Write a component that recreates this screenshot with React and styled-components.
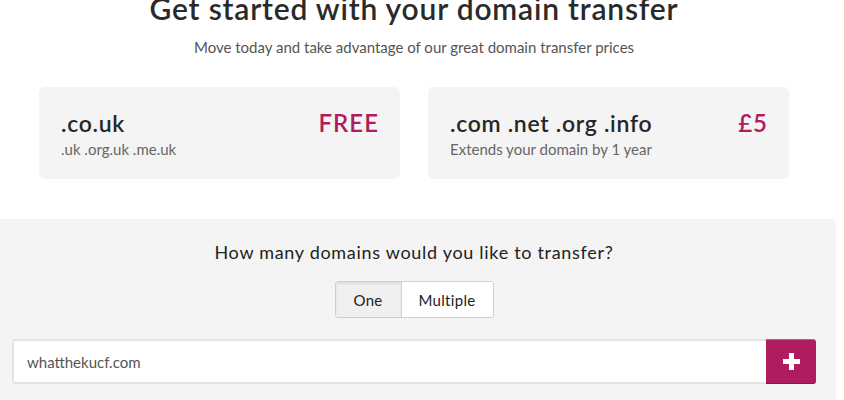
import React, { useState } from 'react';
import styled, { createGlobalStyle } from 'styled-components';

const GlobalStyle = createGlobalStyle`
  html, body {
    margin: 0;
    padding: 0;
    background: #fff;
    overflow: hidden;
  }
  body {
    font-family: 'Lato', 'Open Sans', sans-serif;
    color: #2a2a2a;
  }
`;

const Page = styled.div`
  width: 844px;
  margin-left: -8px;
`;

const Hero = styled.header`
  text-align: center;
  margin-top: -10px;
`;

const Title = styled.h1`
  margin: 0;
  font-size: 30px;
  line-height: 36px;
  font-weight: 600;
  letter-spacing: 0.8px;
  color: #2a2a2a;
`;

const Lead = styled.p`
  margin: 11px 0 0;
  font-size: 15px;
  line-height: 20px;
  color: #555;
`;

const Offers = styled.div`
  display: grid;
  grid-template-columns: 361px 361px;
  gap: 28px;
  justify-content: center;
  margin-top: 30px;
`;

const Offer = styled.div`
  background: #f4f4f4;
  border-radius: 6px;
  height: 92px;
  box-sizing: border-box;
  padding: 22px 21px 0 22px;
  display: flex;
  justify-content: space-between;
  align-items: flex-start;
`;

const OfferName = styled.div`
  font-size: 23px;
  line-height: 28px;
  font-weight: 600;
  letter-spacing: 0.7px;
  color: #262626;
`;

const OfferNote = styled.div`
  font-size: 15px;
  line-height: 20px;
  color: #666;
  margin-top: 2px;
`;

const Price = styled.div`
  font-size: 24px;
  line-height: 28px;
  font-weight: 600;
  letter-spacing: 1px;
  color: #b01c5d;
`;

const Transfer = styled.section`
  margin-top: 40px;
  background: #f4f4f4;
  border-top-right-radius: 6px;
  width: 844px;
  box-sizing: border-box;
  padding: 22px 20px 30px;
  display: flex;
  flex-direction: column;
  align-items: center;
`;

const Question = styled.h2`
  margin: 0;
  font-size: 18px;
  line-height: 22px;
  font-weight: 400;
  letter-spacing: 0.7px;
  color: #222;
`;

const Toggle = styled.div`
  display: flex;
  margin-top: 18px;
  border: 1px solid #cfcfcf;
  border-radius: 3px;
  overflow: hidden;
  background: #fff;
`;

const ToggleButton = styled.button`
  font-family: inherit;
  font-size: 15px;
  letter-spacing: 0.3px;
  color: #222;
  width: ${({ $width }) => $width}px;
  height: 35px;
  padding: 0;
  border: 0;
  border-left: ${({ $first }) => ($first ? '0' : '1px solid #d4d4d4')};
  background: ${({ $active }) => ($active ? '#f0f0f0' : '#fff')};
  box-shadow: ${({ $active }) => ($active ? 'inset 0 2px 3px rgba(0,0,0,0.08)' : 'none')};
  cursor: pointer;
`;

const Row = styled.div`
  display: flex;
  align-self: stretch;
  margin-top: 21px;
  height: 45px;
`;

const Field = styled.input`
  flex: 1;
  min-width: 0;
  box-sizing: border-box;
  height: 45px;
  border: 2px solid #e4e4e4;
  border-right: 0;
  border-radius: 3px 0 0 3px;
  padding: 0 13px;
  font-family: inherit;
  font-size: 15px;
  color: #555;
  background: #fff;
  outline: none;
`;

const AddButton = styled.button`
  width: 50px;
  height: 45px;
  border: 0;
  border-radius: 0 3px 3px 0;
  background: #b01c5d;
  border-top: 1px solid #c75a8a;
  border-bottom: 1px solid #8e1549;
  display: flex;
  align-items: center;
  justify-content: center;
  cursor: pointer;
`;

const offers = [
  { name: '.co.uk', note: '.uk .org.uk .me.uk', price: 'FREE' },
  { name: '.com .net .org .info', note: 'Extends your domain by 1 year', price: '£5' },
];

export default function App() {
  const [mode, setMode] = useState('one');
  const [domain, setDomain] = useState('whatthekucf.com');

  return (
    <Page>
      <GlobalStyle />
      <Hero>
        <Title>Get started with your domain transfer</Title>
        <Lead>Move today and take advantage of our great domain transfer prices</Lead>
      </Hero>

      <Offers>
        {offers.map((o) => (
          <Offer key={o.name}>
            <div>
              <OfferName>{o.name}</OfferName>
              <OfferNote>{o.note}</OfferNote>
            </div>
            <Price>{o.price}</Price>
          </Offer>
        ))}
      </Offers>

      <Transfer>
        <Question>How many domains would you like to transfer?</Question>
        <Toggle>
          <ToggleButton $first $width={65} $active={mode === 'one'} onClick={() => setMode('one')}>
            One
          </ToggleButton>
          <ToggleButton $width={92} $active={mode === 'multiple'} onClick={() => setMode('multiple')}>
            Multiple
          </ToggleButton>
        </Toggle>
        <Row>
          <Field value={domain} onChange={(e) => setDomain(e.target.value)} />
          <AddButton aria-label="Add domain">
            <svg width="17" height="17" viewBox="0 0 17 17">
              <path d="M6 0h5v6h6v5h-6v6H6v-6H0V6h6z" fill="#fff" />
            </svg>
          </AddButton>
        </Row>
      </Transfer>
    </Page>
  );
}
